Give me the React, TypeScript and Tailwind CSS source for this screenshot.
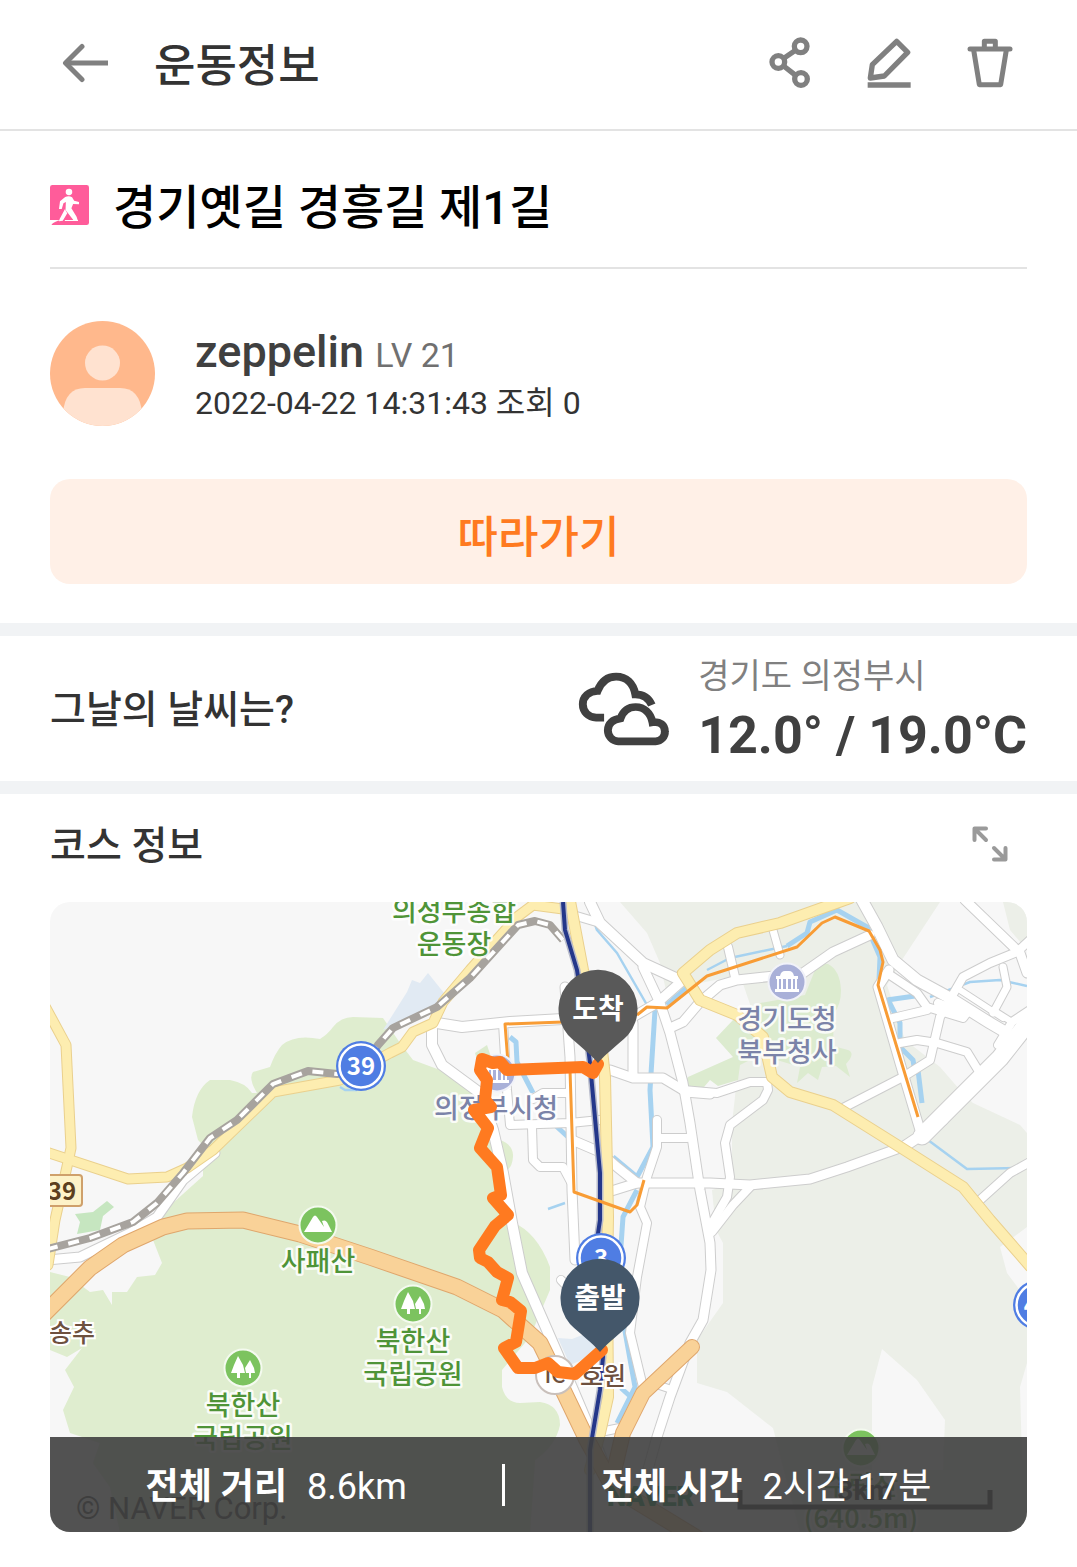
type Road = { d: string; w: number };

// Map geometry, in the coordinate space of the 977x630 tile that starts at 50,902
const whiteRoads: Road[] = [
  { w: 10, d: "M437 1023L462 1027L510 1022L563 1019" },
  { w: 10, d: "M432 1027V1045L442 1065L480 1093L493 1130L503 1173L512 1223L522 1273L547 1330L573 1390L593 1437L610 1480" },
  { w: 8, d: "M503 1023L507 1090L510 1125L570 1123L600 1120" },
  { w: 9, d: "M565 987L570 1057L572 1190L575 1260" },
  { w: 8, d: "M532 1127L533 1160L540 1167H563L571 1182" },
  { w: 8, d: "M533 1099L543 1093H570" },
  { w: 9, d: "M572 1140L600 1152L617 1167L637 1183" },
  { w: 9, d: "M605 1193L637 1183H710L750 1185L810 1179L847 1167L905 1146" },
  { w: 10, d: "M905 1146L920 1136L943 1120" },
  { w: 17, d: "M922 1136L948 1110L1000 1058L1030 1020" },
  { w: 10, d: "M590 902L600 923L643 963L680 980" },
  { w: 8, d: "M573 915L600 923" },
  { w: 9, d: "M643 967L660 1003L670 1033L683 1083L690 1123L700 1190L710 1243L711 1270L703 1320L690 1343L670 1397L657 1437L645 1480" },
  { w: 8, d: "M683 1090L717 1093L750 1082H767L768 1090L763 1100L730 1125L725 1143L730 1177L727 1197L708 1230" },
  { w: 8, d: "M750 1187L733 1205L712 1232" },
  { w: 9, d: "M610 1070L633 1078H663L683 1090" },
  { w: 9, d: "M633 1023V1077" },
  { w: 9, d: "M633 1017L657 1003L682 981" },
  { w: 9, d: "M670 1028L683 1022L700 1002L720 985L737 980L803 973L833 952L870 935" },
  { w: 8, d: "M728 947L735 977" },
  { w: 7, d: "M773 930L780 955" },
  { w: 11, d: "M862 900L877 927L893 960L917 980L950 998L990 1023L1007 1033" },
  { w: 9, d: "M889 970L878 987L900 1063L920 1130" },
  { w: 8, d: "M887 973L917 993L927 1007L963 1018L966 1014L938 1003" },
  { w: 8, d: "M893 1018L927 1010" },
  { w: 8, d: "M900 1043L917 1040L937 1043L967 1052L978 1070" },
  { w: 8, d: "M843 1108L903 1077L930 1060L940 1017L963 977L990 963L1017 952L1030 940" },
  { w: 9, d: "M965 900L1020 953L1027 973" },
  { w: 7, d: "M1003 967L1007 987L993 1013" },
  { w: 6, d: "M960 990L1003 1018" },
  { w: 6, d: "M993 1010L1012 1022" },
  { w: 8, d: "M1030 1010L1012 1022L998 1045" },
  { w: 8, d: "M980 1200L1010 1173L1030 1162" },
  { w: 8, d: "M657 1120V1147L647 1177L640 1207L647 1223L637 1277L630 1333L643 1387" },
  { w: 8, d: "M660 1138H687" },
  { w: 9, d: "M685 1092L710 1094" },
  { w: 9, d: "M215 1153L183 1180L157 1217L130 1233L80 1257L48 1260" },
  { w: 7, d: "M655 1384L673 1390" },
  { w: 8, d: "M561 1280L580 1300" },
  { w: 8, d: "M605 1431L625 1427" },
];

const yellowRoads: Road[] = [
  { w: 9, d: "M46 1008L66 1045L71 1148L68 1162L55 1220L48 1265" },
  { w: 9, d: "M46 1152L128 1179L167 1177L187 1168L213 1150L273 1092L340 1080L390 1053L402 1047L413 1032L433 1023L443 1002L470 970L517 917L533 905L563 909" },
  { w: 10, d: "M569 896L583 970L600 1033L605 1077L608 1217L607 1277L608 1397L600 1433L590 1470" },
  { w: 10, d: "M850 898L780 923L737 933L710 950L683 973L700 1000L737 1015L763 1037L772 1077L790 1092L833 1105L900 1147L963 1187L990 1220L1030 1266" },
];

const highways: Road[] = [
  { w: 15, d: "M44 1314L90 1268L123 1245L163 1227L187 1221L243 1220L300 1234L370 1257L457 1287L503 1310L540 1343L563 1390L587 1440L613 1487L700 1540" },
  { w: 14, d: "M692 1347L643 1393L623 1433L612 1480" },
];

const railway =
  "M563 940L550 925L535 921L518 925L470 978L437 1007L393 1028L378 1045L361 1070L337 1074L308 1071L273 1084L237 1120L210 1138L183 1173L157 1203L133 1222L90 1238L48 1249";

const subway =
  "M563 902L565 930L577 970L585 1023L590 1063L600 1173L600 1220L597 1240L603 1357L600 1390L590 1450V1532";

const trails =
  "M918 1117L878 985L883 962L880 950L869 931L835 917L822 923L797 947L707 976L667 1008L647 1007L637 1015M563 1022L505 1024L508 1063M570 1070L574 1192L630 1212L637 1205L644 1180";

const course =
  "M598 1064L593 1073L583 1067L507 1070L500 1062L493 1063L482 1059L480 1070L487 1080L485 1100L491 1107L474 1110L488 1128L480 1148L497 1167L501 1195L493 1198L508 1215L495 1226L479 1250L480 1258L488 1262L497 1272L508 1278L502 1300L510 1302L521 1311L516 1342L504 1348L518 1368H535L548 1363L558 1372L575 1374L602 1350";

function Roads({ roads, fill, edge }: { roads: Road[]; fill: string; edge: string }) {
  return (
    <g fill="none" strokeLinecap="round" strokeLinejoin="round">
      {roads.map((r) => (
        <path key={r.d} d={r.d} stroke={edge} strokeWidth={r.w + 2} />
      ))}
      {roads.map((r) => (
        <path key={r.d} d={r.d} stroke={fill} strokeWidth={r.w} />
      ))}
    </g>
  );
}

function Label({ x, y, lines, color }: { x: number; y: number; lines: string[]; color: string }) {
  return (
    <text
      textAnchor="middle"
      fill={color}
      stroke="#ffffff"
      strokeOpacity="0.85"
      strokeWidth="5"
      strokeLinejoin="round"
      className="text-[27px] font-medium [paint-order:stroke]"
    >
      {lines.map((line, i) => (
        <tspan key={line} x={x} y={y + i * 33}>
          {line}
        </tspan>
      ))}
    </text>
  );
}

function RouteBadge({ x, y, label }: { x: number; y: number; label: string }) {
  return (
    <g>
      <circle cx={x} cy={y} r="25" fill="#4f7de3" />
      <circle cx={x} cy={y} r="21.5" fill="none" stroke="#ffffff" strokeWidth="2.5" />
      <text x={x} y={y + 9} textAnchor="middle" fill="#ffffff" className="text-[24px] font-bold">
        {label}
      </text>
    </g>
  );
}

function Peak({ x, y }: { x: number; y: number }) {
  return (
    <g transform={`translate(${x} ${y})`}>
      <circle r="18.5" fill="#7cc35f" stroke="#f4faef" strokeWidth="2" />
      <path d="M-14 7L-5 -8Q-3 -11 -1 -8L6 2L4 -4Q8 -6 10 -1L14 7Z" fill="#ffffff" />
    </g>
  );
}

function Forest({ x, y }: { x: number; y: number }) {
  return (
    <g transform={`translate(${x} ${y})`}>
      <circle r="18.5" fill="#7cc35f" stroke="#f4faef" strokeWidth="2" />
      <path d="M-5 -12L0 -3L2 5H-3V10H-6V5H-12L-9 -3ZM7 -8L11 0L12 5H8V10H6V5H3L2 0Z" fill="#ffffff" />
    </g>
  );
}

function CityHall({ x, y }: { x: number; y: number }) {
  return (
    <g transform={`translate(${x} ${y})`}>
      <circle r="18.5" fill="#a9b0d8" stroke="#f1f2f9" strokeWidth="2" />
      <path d="M-11 -3V-6H-7Q-6 -11 -2 -11H2Q6 -11 7 -6H11V-3ZM-10 -4H-8V7H-10ZM-6 -4H-4V7H-6ZM-1 -4H1V7H-1ZM4 -4H6V7H4ZM8 -4H10V7H8ZM-12 7H12V10H-12Z" fill="#ffffff" />
    </g>
  );
}

function Pin({ x, y, label, color }: { x: number; y: number; label: string; color: string }) {
  return (
    <g>
      <path
        transform={`translate(${x} ${y})`}
        d="M0 54C-8 44 -19 37 -30 26A39.500 39.500 0 1 1 30 26C19 37 8 44 0 54Z"
        fill={color}
      />
      <text x={x} y={y + 10} textAnchor="middle" fill="#ffffff" className="text-[28px] font-bold">
        {label}
      </text>
    </g>
  );
}

function CourseMap() {
  return (
    <svg
      viewBox="50 902 977 630"
      preserveAspectRatio="xMidYMid slice"
      className="block h-[630px] w-full bg-[#f7f7f7] font-['Noto_Sans_CJK_KR',sans-serif]"
      role="img"
      aria-label="코스 지도"
    >
      {/* urban background */}
      <path fill="#ecefe8" d="M620 902L647 933L660 963L668 1000L690 985L740 975L753 1013L738 1070L732 1123V1183L712 1190L716 1230L723 1243V1303L697 1340V1383L727 1392L773 1428L800 1532H1027V902Z" />
      <path
        fill="#f7f7f7"
        d="M940 902L900 963L887 985L905 1040L940 1067L960 1090L973 1103L1020 1125L1027 1133V950L1010 930L1003 902ZM882 1349L917 1380L945 1420L943 1470H872V1387ZM1027 1227L1000 1247L1007 1273L1027 1300ZM1027 1363L1020 1387L1022 1460H1027Z"
      />
      {/* woods and parks */}
      <path
        fill="#dfedcf"
        d="M383 1018L400 1043L413 1060L440 1070L470 1090L488 1130L500 1140Q514 1145 513 1157Q512 1170 503 1172L512 1222Q537 1232 550 1267V1290L530 1337L513 1357L502 1370V1387Q506 1403 520 1403L540 1402Q560 1405 560 1425Q556 1445 535 1460L530 1532H120L110 1487L93 1463L100 1443L70 1433L63 1410L74 1387L65 1370L82 1348L67 1357L50 1350V1272L70 1277L90 1292L103 1290L112 1305V1292H127L137 1277L155 1275L162 1263L153 1240L157 1225L173 1203L203 1176V1170L213 1155L198 1140L192 1117Q195 1090 210 1080H230Q246 1083 252 1093L257 1093Q248 1078 253 1072L270 1067Q275 1053 282 1045Q295 1034 320 1039Q328 1034 333 1027Q341 1017 353 1017Z"
      />
      <path
        fill="#dcebcf"
        d="M813 975Q817 962 828 964Q840 970 841 990Q841 1005 834 1013L833 1046L848 1050Q856 1053 846 1064L850 1077L836 1066L822 1067L818 1080L808 1073L797 1083L800 1067L760 1055L740 1065L738 1080L718 1086L710 1080L698 1094L683 1084L688 1077L733 1057L716 1038L733 1020L760 1003L805 995ZM475 1053L487 1045L492 1060L480 1070Z"
      />
      <path fill="#c6e6c0" d="M75 1214L93 1212L107 1201L114 1207L103 1216L100 1230L77 1234L80 1222Z" />
      {/* water */}
      <path fill="#e1eaf3" d="M383 1030L407 992L412 980L420 983L428 973L444 993L433 1012ZM558 1338L572 1339L590 1332L602 1352L570 1365Z" />
      <g fill="none" stroke="#a6d2f0" strokeLinejoin="round">
        <path strokeWidth="2.5" d="M587 902L597 930L617 953L647 1005M707 970L730 958L787 946M928 1140L967 1169L1023 1168M930 997L970 982L1000 980L1027 986M340 1087L345 1090H357M548 1209L565 1203" />
        <path strokeWidth="5" d="M655 1010L650 1090L653 1147L637 1177L613 1157M637 1190L623 1217L620 1260M623 1320L635 1387L617 1423M621 1388L632 1398M510 1037L516 1042L517 1062L533 1093M555 1125L568 1137M667 1005L690 985" />
        <path strokeWidth="5" d="M787 946L807 933L810 922L837 910L867 927L880 957L879 980M887 998L900 1023V1047L913 1060L915 1072M918 1070L922 1103M887 1000L915 996" />
      </g>

      <Roads roads={whiteRoads} fill="#ffffff" edge="#cdcdcd" />
      <Roads roads={yellowRoads} fill="#fdedb0" edge="#ead08d" />
      <Roads roads={highways} fill="#f9d298" edge="#dfa66c" />

      <g fill="none" strokeLinejoin="round">
        <path d={railway} stroke="#a7a39e" strokeWidth="8" />
        <path d={railway} stroke="#ffffff" strokeWidth="4" strokeDasharray="11 11" />
        <path d={subway} stroke="#b9bccb" strokeWidth="7" />
        <path d={subway} stroke="#24378a" strokeWidth="4" />
        <path d={trails} stroke="#f89c35" strokeWidth="3" />
      </g>

      <rect x="30" y="1175" width="52" height="31" rx="3" fill="#fdf2c8" stroke="#cfa06b" strokeWidth="2" />
      <text x="62" y="1200" textAnchor="middle" fill="#5c3f1e" className="text-[24px] font-bold">
        39
      </text>
      <RouteBadge x={361} y={1066} label="39" />
      <RouteBadge x={601} y={1258} label="3" />
      <RouteBadge x={1038} y={1305} label="43" />

      <Label x={454} y={921} lines={["의정부종합", "운동장"]} color="#4f9438" />
      <Label x={318} y={1271} lines={["사패산"]} color="#4f9438" />
      <Label x={413} y={1351} lines={["북한산", "국립공원"]} color="#4f9438" />
      <Label x={243} y={1415} lines={["북한산", "국립공원"]} color="#4f9438" />
      <Label x={861} y={1495} lines={["수락산", "(640.5m)"]} color="#4f9438" />
      <Label x={787} y={1029} lines={["경기도청", "북부청사"]} color="#7b83a8" />
      <Label x={496} y={1118} lines={["의정부시청"]} color="#7b83a8" />
      <Peak x={318} y={1225} />
      <Forest x={413} y={1304} />
      <Forest x={243} y={1368} />
      <Peak x={861} y={1448} />
      <CityHall x={787} y={982} />
      <CityHall x={497} y={1073} />

      <g stroke="#ffffff" strokeWidth="4" fill="#6e513f" className="text-[25px] font-medium [paint-order:stroke]">
        <text x="49" y="1342">송추</text>
        <text x="580" y="1385">호원</text>
      </g>
      <circle cx="555" cy="1375" r="19" fill="#ffffff" stroke="#c9c0bb" strokeWidth="2" />
      <text x="555" y="1383" textAnchor="middle" fill="#6e513f" className="text-[22px] font-medium">
        IC
      </text>

      <path d={course} fill="none" stroke="#ff7a20" strokeWidth="12" strokeLinejoin="round" strokeLinecap="round" />
      <Pin x={598} y={1009} label="도착" color="#595959" />
      <Pin x={600} y={1298} label="출발" color="#44576a" />

      <text x="76" y="1519" fill="#333333" className="font-[Roboto] text-[31px]">
        © NAVER Corp.
      </text>
      <text x="607" y="1506" fill="#03853e" className="font-[Roboto] text-[27px] font-black">
        NAVER
      </text>
      <path d="M740 1490V1507H990V1490" fill="none" stroke="#222222" strokeWidth="5" />
      <text x="865" y="1500" textAnchor="middle" fill="#222222" className="font-[Roboto] text-[28px] font-bold">
        3km
      </text>
    </svg>
  );
}

function Header() {
  return (
    <header className="flex h-[131px] items-center border-b-2 border-[#e3e3e3] pr-16 pb-1 pl-[62px] text-[#808080]">
      <button type="button" aria-label="뒤로" className="mr-11 shrink-0">
        <svg width="48" height="40" viewBox="0 -1 48 40" fill="none" stroke="currentColor" strokeWidth="5" strokeLinejoin="round">
          <path d="M46 19H4" />
          <path d="M20 2.500L3.500 19L20 35.500" strokeLinecap="round" />
        </svg>
      </button>
      <h1 className="pt-2 text-[45px] leading-none font-medium text-[#333]">운동정보</h1>
      <div className="ml-auto flex items-center gap-14">
        <button type="button" aria-label="공유">
          <svg width="42" height="52" viewBox="88 82 126 156" fill="none" stroke="currentColor" strokeWidth="16">
            <circle cx="116" cy="157" r="19" />
            <circle cx="183" cy="110" r="19" />
            <circle cx="184" cy="208" r="19" />
            <path d="M132 146L167 122M132 169L168 197" />
          </svg>
        </button>
        <button type="button" aria-label="수정">
          <svg width="44" height="50" viewBox="385 83 132 150" fill="none" stroke="currentColor" strokeWidth="16" strokeLinejoin="round">
            <path d="M474 93L507 126L437 197L395 203L401 163Z" />
            <path d="M387 224H516" />
          </svg>
        </button>
        <button type="button" aria-label="삭제">
          <svg width="46" height="50" viewBox="682 84 138 150" fill="none" stroke="currentColor" strokeWidth="15" strokeLinejoin="round">
            <path d="M691 117H811" strokeLinecap="round" />
            <path d="M734 117V94H767V117" />
            <path d="M702 120L719 224H783L800 120" />
          </svg>
        </button>
      </div>
    </header>
  );
}

function WalkIcon() {
  return (
    <svg width="39" height="40" viewBox="145 555 113 120" preserveAspectRatio="none" className="shrink-0" aria-hidden="true">
      <rect x="145" y="555" width="113" height="120" rx="7" fill="#ff5c9a" />
      <circle cx="200" cy="576" r="9.500" fill="#ffffff" />
      <path d="M189 591Q200 586 209 592L215 602L229 606V613L212 612L207 625L222 650L226 663H211L212 659L190 630L191 606L184 610L179 627H171L174 604ZM188 628L195 640L182 662L171 664L173 657Z" fill="#ffffff" />
      <path d="M144 660H178Q155 664 148 676H144ZM188 660H226V663H188Z" fill="#ffffff" />
    </svg>
  );
}

function CloudyIcon() {
  return (
    <svg width="92" height="74" viewBox="118 156 268 222" preserveAspectRatio="none" fill="none" stroke="#404040" strokeWidth="23" role="img" aria-label="흐림">
      <path d="M235 364A31 33 0 0 1 205 331C205 311 219 298 242 295C250 272 264 261 286 261C311 261 330 279 335 307C357 303 371 316 371 334A28 28 0 0 1 344 364Z" />
      <path d="M194 293H171C148 292 132 275 132 253C132 230 150 213 175 213C185 186 203 170 229 170C259 170 279 190 285 223C310 223 324 234 333 255" />
    </svg>
  );
}

function Avatar() {
  return (
    <svg viewBox="0 0 105 105" className="size-[105px] shrink-0 rounded-full" aria-hidden="true">
      <rect width="105" height="105" fill="#ffb88c" />
      <circle cx="52.500" cy="42" r="17.500" fill="#ffe2d0" />
      <path d="M13 105V92Q15 67 35 67H70Q90 67 92 92V105Z" fill="#ffe2d0" />
    </svg>
  );
}

export default function App() {
  return (
    <div className="w-full bg-white pb-[35px] font-['Roboto','Noto_Sans_CJK_KR',sans-serif] text-[#333]">
      <Header />

      <main>
        <section className="px-[50px]">
          <div className="flex h-[138px] items-center gap-6 border-b-2 border-[#e3e3e3] pt-3">
            <WalkIcon />
            <h2 className="pt-1 text-[47px] leading-none font-medium text-black">경기옛길 경흥길 제1길</h2>
          </div>

          <div className="flex items-center gap-10 pt-[52px]">
            <Avatar />
            <div className="pt-1">
              <p className="text-[45px] leading-[52px] font-medium text-[#404040]">
                zeppelin <span className="text-[34px] font-normal text-[#707070]">LV 21</span>
              </p>
              <p className="text-[32px] leading-[44px]">2022-04-22 14:31:43 조회 0</p>
            </div>
          </div>

          <button
            type="button"
            className="mt-[53px] mb-[39px] block h-[105px] w-full rounded-[20px] bg-[#fff0e7] pt-3 text-[44px] font-medium text-[#ff7a20]"
          >
            따라가기
          </button>
        </section>

        {/* 날씨 */}
        <section className="flex h-[171px] items-center justify-between border-y-[13px] border-[#f1f3f5] px-[50px]">
          <h3 className="pt-1 text-[39px] leading-none font-medium">그날의 날씨는?</h3>
          <div className="flex items-center gap-7">
            <CloudyIcon />
            <div className="pt-1">
              <p className="text-[34px] leading-[50px] text-[#808080]">경기도 의정부시</p>
              <p className="text-[52px] leading-[70px] font-bold text-[#404040]">12.0° / 19.0°C</p>
            </div>
          </div>
        </section>

        {/* 코스 */}
        <section className="px-[50px]">
          <div className="flex h-[108px] items-center justify-between pr-[18px] pb-2">
            <h3 className="pt-1 text-[39px] leading-none font-medium">코스 정보</h3>
            <button type="button" aria-label="지도 확대">
              <svg width="38" height="38" viewBox="0 0 38 38" fill="none" stroke="#9a9a9a" strokeWidth="4" strokeLinecap="round" strokeLinejoin="round">
                <path d="M15 3.500H3.500V15M4 4L15 15M23 34.500H34.500V23M34 34L23 23" />
              </svg>
            </button>
          </div>

          <div className="relative overflow-hidden rounded-[20px]">
            <CourseMap />
            <dl className="absolute inset-x-0 bottom-0 flex h-[95px] items-center bg-[#3f3f3f]/90 text-[36px] text-white">
              <div className="flex flex-auto items-center justify-center gap-5 pt-1">
                <dt className="font-bold">전체 거리</dt>
                <dd>8.6km</dd>
              </div>
              <div className="h-[42px] w-[3px] bg-white" />
              <div className="flex flex-auto items-center justify-center gap-5 pt-1">
                <dt className="font-bold">전체 시간</dt>
                <dd>2시간 17분</dd>
              </div>
            </dl>
          </div>
        </section>
      </main>
    </div>
  );
}
